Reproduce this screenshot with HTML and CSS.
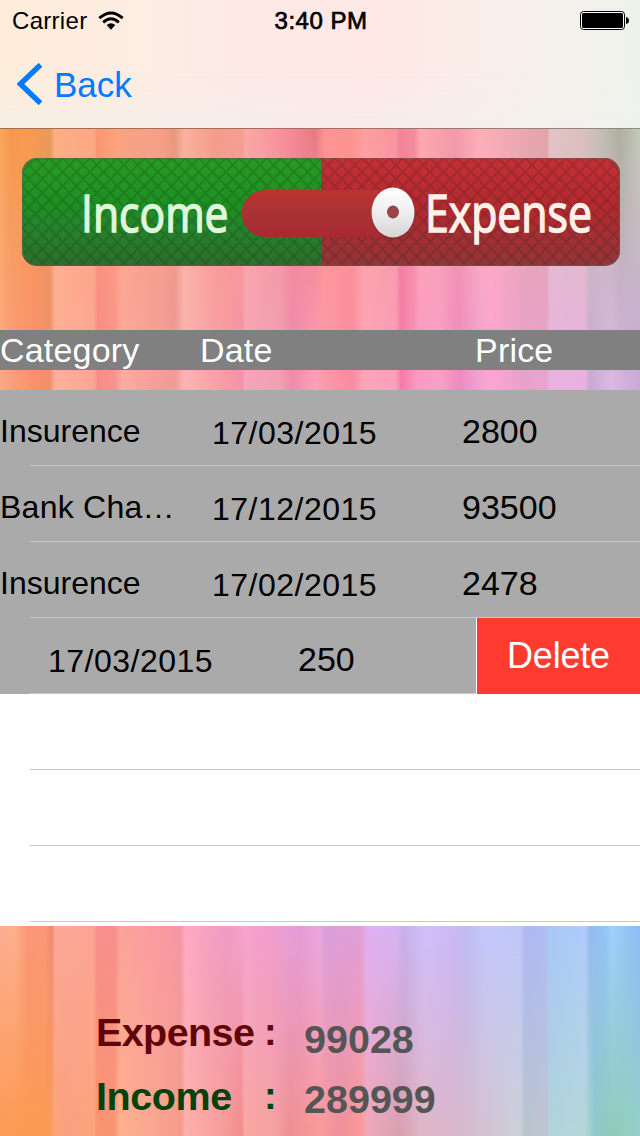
FILE: index.html
```html
<!DOCTYPE html>
<html lang="en">
<head>
<meta charset="utf-8">
<title>Income and Expense</title>
<link rel="stylesheet" href="styles.css">
</head>
<body>
<div class="screen">
  <header class="nav">
    <div class="status">
      <div class="carrier"><span>Carrier</span>
        <svg width="26" height="20" viewBox="0 0 26 20"><g fill="none" stroke="#000" stroke-width="2.9"><path d="M1.3 7.2Q13-3.3 24.7 7.2"/><path d="M5.2 11.3Q13 4.4 20.8 11.3"/></g><path d="M8.7 14.1Q13 10.4 17.3 14.1L13 18.8Z"/></svg>
      </div>
      <div class="time">3:40 PM</div>
      <svg class="battery" width="50" height="20" viewBox="0 0 50 20"><rect x=".5" y=".5" width="44" height="18" rx="3" fill="#fff" stroke="#000"/><rect x="2" y="2" width="41" height="15" rx="1.5"/><path d="M46 6Q49 6.5 49 9.5T46 13Z"/></svg>
    </div>
    <div class="back">
      <svg width="26" height="42" viewBox="0 0 26 42"><path d="M23.500 1.8L3.300 21L23.500 40.200" fill="none" stroke="#007aff" stroke-width="5.400"/></svg>
      <span>Back</span>
    </div>
  </header>

  <section class="top fabric">
    <svg class="toggle" width="598" height="108" viewBox="0 0 598 108">
      <defs>
        <clipPath id="shape"><rect width="598" height="108" rx="15"/></clipPath>
        <linearGradient id="green" x2="0" y2="1"><stop stop-color="#299a25"/><stop offset=".45" stop-color="#1d9022"/><stop offset=".6" stop-color="#24862b"/><stop offset="1" stop-color="#2b6e2b"/></linearGradient>
        <linearGradient id="red" x2="0" y2="1"><stop stop-color="#c52f36"/><stop offset=".45" stop-color="#b5282f"/><stop offset="1" stop-color="#943438"/></linearGradient>
        <linearGradient id="track" x2="0" y2="1"><stop stop-color="#bd3230"/><stop offset=".5" stop-color="#a73336"/><stop offset="1" stop-color="#a92a30"/></linearGradient>
        <linearGradient id="knob" x2="0" y2="1"><stop stop-color="#fff"/><stop offset=".5" stop-color="#eee"/><stop offset="1" stop-color="#d5d5d5"/></linearGradient>
        <pattern id="mesh" width="13.6" height="14" patternUnits="userSpaceOnUse"><path d="M0 0L13.6 14M13.6 0L0 14" stroke="#0b2410" stroke-opacity=".18" stroke-width="2.2"/></pattern>
      </defs>
      <g clip-path="url(#shape)">
        <rect width="299" height="108" fill="url(#green)"/>
        <rect x="299" width="299" height="108" fill="url(#red)"/>
        <rect width="598" height="108" fill="url(#mesh)"/>
        <path d="M243 32H368V79H243A23.500 23.500 0 0 1 243 32Z" fill="url(#track)"/>
      </g>
      <rect x=".7" y=".7" width="596.600" height="106.600" rx="15" fill="none" stroke="#705650" stroke-opacity=".55" stroke-width="1.500"/>
      <ellipse cx="371" cy="55.500" rx="22" ry="26" fill="#7c2a2c" opacity=".5"/>
      <ellipse cx="371" cy="54.500" rx="21.500" ry="25" fill="url(#knob)"/>
      <ellipse cx="371" cy="54" rx="6" ry="6.500" fill="#99454a"/>
      <text class="toggle-label" transform="translate(59 73.5) scale(.82 1)" fill="#def7d9" stroke="#def7d9">Income</text>
      <text class="toggle-label" transform="translate(403 73.5) scale(.823 1)" fill="#fff0ea" stroke="#fff0ea">Expense</text>
    </svg>
    <div class="columns"><span>Category</span><span>Date</span><span>Price</span></div>
  </section>

  <main class="list">
    <div class="row"><span class="category">Insurence</span><span class="date">17/03/2015</span><span class="price">2800</span></div>
    <div class="row"><span class="category long">Bank Cha…</span><span class="date">17/12/2015</span><span class="price">93500</span></div>
    <div class="row"><span class="category">Insurence</span><span class="date">17/02/2015</span><span class="price">2478</span></div>
    <div class="row swiped"><span class="date">17/03/2015</span><span class="price">250</span><span class="delete">Delete</span></div>
    <div class="row empty"></div>
    <div class="row empty"></div>
    <div class="row empty"></div>
  </main>

  <footer class="totals fabric">
    <div class="total expense"><span class="label">Expense</span><span class="colon">:</span><span class="value">99028</span></div>
    <div class="total income"><span class="label">Income</span><span class="colon">:</span><span class="value">289999</span></div>
  </footer>
</div>
</body>
</html>
```
FILE: styles.css
```css
* { box-sizing: border-box; }
body { margin: 0; font-family: "Liberation Sans", Arial, sans-serif; color: #000; }
svg { display: block; flex: none; }
.screen { width: 640px; height: 1136px; display: flex; flex-direction: column; overflow: hidden; background: #fff; }

.nav {
  height: 129px; flex: none; border-bottom: 1px solid #a77;
  border-image: linear-gradient(90deg, #a07050, #a76a66 50%, #8b8b80) 1;
  background:
    linear-gradient(180deg, transparent 55%, rgba(240, 240, 238, .5)),
    linear-gradient(90deg, #feedda, #fcece3 25%, #fde9e6 42%, #ffe8e6 58%, #f9ede8 75%, #f5f1eb 87%, #eef2eb);
}
.status { height: 42px; display: grid; grid-template-columns: 262px 1fr 262px; align-items: center; padding: 0 10px 0 12px; font-size: 24px; line-height: 42px; }
.carrier { display: flex; align-items: center; gap: 11px; letter-spacing: .3px; }
.carrier svg { margin-top: -1px; }
.time { text-align: center; white-space: nowrap; letter-spacing: .5px; -webkit-text-stroke: .7px #000; margin: 0 -10px; }
.battery { justify-self: end; }
.back { display: flex; align-items: center; gap: 11px; padding: 0 0 0 17px; height: 84px; color: #007aff; font-size: 35px; }
.back span { margin-top: 1px; }

.fabric { position: relative; isolation: isolate; flex: none; }
.fabric::before { content: ""; position: absolute; inset: 0; z-index: -1; -webkit-mask-image: linear-gradient(transparent, #000); mask-image: linear-gradient(transparent, #000); }
.top {
  height: 261px; padding-top: 29px;
  background: linear-gradient(90deg, #fba85c 0px, #f59a4c 10px, #f99b50 30px, #e79a5a 50px, #fdb083 55px, #fba885 94px, #fb9770 97px, #fda57c 118px, #f5a284 125px, #f8a086 160px, #ea9880 175px, #fbb19c 184px, #f49c8a 215px, #f79f92 243px, #fba8a5 245px, #f78f98 285px, #e87a85 315px, #ff9590 325px, #fb9590 350px, #fda0a0 365px, #f9949f 396px, #f48399 400px, #f58c9c 415px, #ffa9b0 420px, #f29aa8 455px, #ffb0b8 480px, #eba8b0 520px, #e0a5a8 547px, #e5c3c5 550px, #d8c0bc 585px, #c5bfb4 600px, #b0b0a0 620px, #c4cab8 640px);
}
.top::before {
  background: linear-gradient(90deg, #fca988 0px, #fb9a7a 17px, #fb8f6e 35px, #ef8f6c 50px, #fdb09a 55px, #fca594 94px, #f98a88 98px, #f99290 115px, #fcaca0 122px, #f6a09a 150px, #ee9a98 175px, #fcb4b4 184px, #f99aa6 225px, #f690aa 242px, #f6a5b8 245px, #f0a0b4 280px, #ee8bac 292px, #ffa0b8 315px, #fb9aa8 325px, #fb8aa0 352px, #fda5b8 364px, #f9a0bc 396px, #f57aa8 401px, #fb98c4 417px, #f8a0c8 440px, #f088c0 459px, #eda0d0 478px, #ffa4d4 490px, #e8a0cc 523px, #e8a4d0 547px, #e8b0e0 549px, #e8b0e0 585px, #c8a8d4 590px, #dcb8e4 610px, #c8a8d8 640px);
}
.toggle { margin-left: 22px; }
.toggle-label { font: 52px "Open Sans", "Noto Sans", sans-serif; stroke-width: 1.5px; }
.columns { margin-top: 64px; height: 40px; background: #808080; color: #fff; font-size: 34px; line-height: 40px; display: grid; grid-template-columns: 200px 275px 1fr; letter-spacing: .2px; }

.list { height: 536px; flex: none; overflow: hidden; background: #fff; }
.row { position: relative; height: 76px; display: grid; grid-template-columns: 212px 250px 1fr; grid-template-rows: 76px; background: #aaa; line-height: 76px; }
.row::after { content: ""; position: absolute; left: 30px; right: 0; bottom: 0; height: 1px; background: #c8c7cc; }
.empty { background: #fff; }
.category { padding-top: 3px; font-size: 32px; }
.long { letter-spacing: .25px; }
.date { padding-top: 5px; font-size: 32px; letter-spacing: .5px; }
.price { padding-top: 4px; font-size: 34px; line-height: 74px; }
.swiped { grid-template-columns: 249px 227px 164px; }
.swiped .date { padding-left: 48px; }
.swiped .price { padding-left: 49px; }
.delete { z-index: 1; background: #ff3b30; color: #fff; border-left: 1px solid #fff; text-align: center; font-size: 36px; letter-spacing: -.2px; line-height: 76px; }

.totals {
  height: 210px; padding: 80px 0 0 96px; font-size: 40px;
  background: linear-gradient(90deg, #fcae90 0px, #fdb08c 15px, #f99678 28px, #fb9878 45px, #ee8a74 52px, #fca898 55px, #fca594 93px, #f88f8c 97px, #f7908e 115px, #fba49a 120px, #fb9aa2 160px, #f598a6 181px, #ffaac4 185px, #ef9cc4 225px, #f4a4d0 245px, #ef9ccc 275px, #e8a0d8 285px, #e69cd8 300px, #eaa8e0 320px, #dca0e0 325px, #e0a0d8 360px, #e0b0f4 367px, #d8b4f4 395px, #c8b0ec 405px, #d0c0fc 425px, #ccb8f8 455px, #c0bcf4 465px, #c4c8fc 485px, #c0c8fa 520px, #b0b8f4 525px, #b0bcf4 545px, #a8c8f8 549px, #b0ccfc 585px, #94bcf0 590px, #94c4f8 605px, #a0d0fc 612px, #8cbcf4 640px);
}
.totals::before {
  background: linear-gradient(90deg, #fd9a55 0px, #fb9a50 48px, #fda476 55px, #f8a080 65px, #fda47a 94px, #f99470 97px, #f99470 114px, #fdb08c 120px, #faa890 150px, #f59c88 181px, #fcb0a8 185px, #f79c98 225px, #f28c88 241px, #faa8a0 245px, #f5a0a0 275px, #ee9090 290px, #fb9a98 320px, #f09098 340px, #fb9a98 362px, #f0a8b8 367px, #d8a0b0 400px, #e0b4c4 420px, #d8b8cc 460px, #d4c4d4 490px, #ccd0d8 520px, #b8c4cc 525px, #c0c4d0 547px, #b0d4d8 549px, #b4d8d8 585px, #90c8c8 595px, #90ccb8 615px, #94d0c8 640px);
}
.total { height: 64px; display: grid; grid-template-columns: 168px 40px 1fr; line-height: 53px; font-weight: bold; font-size: 39.5px; }
.expense { color: #600509; }
.income { color: #04420b; }
.label { letter-spacing: -.6px; }
.income .label { letter-spacing: -.4px; }
.value { color: #555; line-height: 67px; }
.colon { font-size: 38px; }
.income .value { line-height: 59px; }
```
